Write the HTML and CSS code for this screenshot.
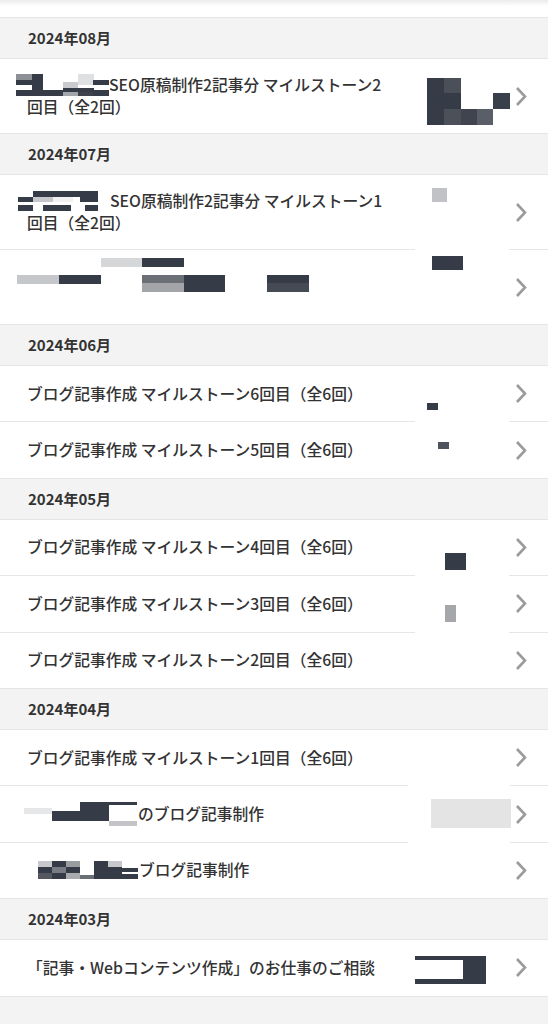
FILE: index.html
```html
<!DOCTYPE html>
<html lang="ja">
<head>
<meta charset="utf-8">
<title>取引履歴</title>
<link rel="stylesheet" href="styles.css">
</head>
<body>
<div class="page">
  <div class="topbar"></div>

  <section class="month">
    <h2 class="month-head">2024年08月</h2>
    <ul class="items">
      <li class="item">
        <p class="title"><svg class="pre pre-a" width="93" height="22" viewBox="0 0 93 22"><rect x="0" y="0" width="16" height="6" fill="#8d9096"/><rect x="16" y="0" width="11" height="22" fill="#363c47"/><rect x="0" y="6" width="16" height="5" fill="#363c47"/><rect x="0" y="16" width="47" height="6" fill="#363c47"/><rect x="47" y="8" width="15" height="6" fill="#c9cbce"/><rect x="47" y="14" width="31" height="4" fill="#363c47"/><rect x="47" y="18" width="15" height="4" fill="#a3a6aa"/><rect x="62" y="0" width="16" height="11" fill="#dfe0e2"/><rect x="62" y="18" width="16" height="4" fill="#3d434d"/><rect x="77" y="6" width="16" height="5" fill="#363c47"/><rect x="77" y="16" width="16" height="6" fill="#363c47"/></svg>SEO原稿制作2記事分 マイルストーン2回目（全2回）</p>
        <svg class="rd rd-1" width="83" height="47" viewBox="0 0 83 47"><rect x="0" y="0" width="17" height="47" fill="#363c47"/><rect x="17" y="0" width="17" height="15" fill="#4a4f58"/><rect x="17" y="15" width="17" height="16" fill="#363c47"/><rect x="17" y="31" width="17" height="16" fill="#4b5059"/><rect x="34" y="31" width="16" height="16" fill="#3f444e"/><rect x="50" y="31" width="16" height="16" fill="#5a5e66"/><rect x="66" y="15" width="17" height="16" fill="#3a404b"/></svg>
        <svg class="chev" width="12" height="21" viewBox="0 0 12 21"><path d="M2 2 L10 10.5 L2 19" /></svg>
      </li>
    </ul>
  </section>

  <section class="month">
    <h2 class="month-head">2024年07月</h2>
    <ul class="items">
      <li class="item gap">
        <p class="title"><svg class="pre pre-b" width="80" height="22" viewBox="0 0 80 22"><rect x="15" y="1" width="65" height="6" fill="#363c47"/><rect x="0" y="7" width="15" height="5" fill="#363c47"/><rect x="15" y="7" width="20" height="5" fill="#c5c7ca"/><rect x="35" y="7" width="20" height="5" fill="#f1f1f2"/><rect x="62" y="7" width="18" height="5" fill="#363c47"/><rect x="0" y="15" width="15" height="6" fill="#363c47"/><rect x="25" y="15" width="28" height="6" fill="#363c47"/><rect x="67" y="15" width="13" height="6" fill="#363c47"/></svg>SEO原稿制作2記事分 マイルストーン1回目（全2回）</p>
        <span class="rd rd-2"></span>
        <svg class="chev" width="12" height="21" viewBox="0 0 12 21"><path d="M2 2 L10 10.5 L2 19" /></svg>
      </li>
      <li class="item">
        <p class="title blank"></p>
        <svg class="rd rd-3" width="292" height="34" viewBox="0 0 292 34"><rect x="84" y="0" width="41" height="9" fill="#d6d7d9"/><rect x="125" y="0" width="42" height="9" fill="#363c47"/><rect x="0" y="17" width="42" height="9" fill="#c5c7ca"/><rect x="42" y="17" width="42" height="9" fill="#363c47"/><rect x="125" y="17" width="42" height="8" fill="#6b6f76"/><rect x="125" y="25" width="42" height="9" fill="#a3a5a9"/><rect x="167" y="17" width="41" height="17" fill="#363c47"/><rect x="250" y="17" width="42" height="8" fill="#363c47"/><rect x="250" y="25" width="42" height="9" fill="#454a54"/></svg>
        <span class="rd rd-4"></span>
        <svg class="chev" width="12" height="21" viewBox="0 0 12 21"><path d="M2 2 L10 10.5 L2 19" /></svg>
      </li>
    </ul>
  </section>

  <section class="month">
    <h2 class="month-head">2024年06月</h2>
    <ul class="items">
      <li class="item gap">
        <p class="title">ブログ記事作成 マイルストーン6回目（全6回）</p>
        <span class="rd rd-5"></span>
        <svg class="chev" width="12" height="21" viewBox="0 0 12 21"><path d="M2 2 L10 10.5 L2 19" /></svg>
      </li>
      <li class="item">
        <p class="title">ブログ記事作成 マイルストーン5回目（全6回）</p>
        <span class="rd rd-6"></span>
        <svg class="chev" width="12" height="21" viewBox="0 0 12 21"><path d="M2 2 L10 10.5 L2 19" /></svg>
      </li>
    </ul>
  </section>

  <section class="month">
    <h2 class="month-head">2024年05月</h2>
    <ul class="items">
      <li class="item gap">
        <p class="title">ブログ記事作成 マイルストーン4回目（全6回）</p>
        <span class="rd rd-7"></span>
        <svg class="chev" width="12" height="21" viewBox="0 0 12 21"><path d="M2 2 L10 10.5 L2 19" /></svg>
      </li>
      <li class="item gap">
        <p class="title">ブログ記事作成 マイルストーン3回目（全6回）</p>
        <span class="rd rd-8"></span>
        <svg class="chev" width="12" height="21" viewBox="0 0 12 21"><path d="M2 2 L10 10.5 L2 19" /></svg>
      </li>
      <li class="item">
        <p class="title">ブログ記事作成 マイルストーン2回目（全6回）</p>
        <svg class="chev" width="12" height="21" viewBox="0 0 12 21"><path d="M2 2 L10 10.5 L2 19" /></svg>
      </li>
    </ul>
  </section>

  <section class="month">
    <h2 class="month-head">2024年04月</h2>
    <ul class="items">
      <li class="item gap wide">
        <p class="title">ブログ記事作成 マイルストーン1回目（全6回）</p>
        <svg class="chev" width="12" height="21" viewBox="0 0 12 21"><path d="M2 2 L10 10.5 L2 19" /></svg>
      </li>
      <li class="item gap wide">
        <p class="title"><svg class="pre pre-c" width="113" height="24" viewBox="0 0 113 24"><rect x="0" y="6" width="28" height="6" fill="#e6e7e8"/><rect x="28" y="9" width="28" height="10" fill="#363c47"/><rect x="56" y="0" width="29" height="19" fill="#363c47"/><rect x="85" y="0" width="28" height="3" fill="#363c47"/><rect x="85" y="19" width="28" height="5" fill="#c2c4c7"/></svg>のブログ記事制作</p>
        <span class="rd rd-9"></span>
        <svg class="chev" width="12" height="21" viewBox="0 0 12 21"><path d="M2 2 L10 10.5 L2 19" /></svg>
      </li>
      <li class="item">
        <p class="title"><svg class="pre pre-d" width="100" height="18" viewBox="0 0 100 18"><rect x="0" y="0" width="14" height="6" fill="#c8c9cc"/><rect x="0" y="6" width="14" height="6" fill="#363c47"/><rect x="0" y="12" width="14" height="6" fill="#55595f"/><rect x="14" y="0" width="14" height="6" fill="#363c47"/><rect x="14" y="6" width="14" height="6" fill="#797c82"/><rect x="14" y="12" width="14" height="6" fill="#363c47"/><rect x="28" y="0" width="14" height="6" fill="#9a9ca0"/><rect x="28" y="6" width="14" height="6" fill="#363c47"/><rect x="28" y="12" width="14" height="6" fill="#a9abaf"/><rect x="42" y="14" width="14" height="4" fill="#6b6f76"/><rect x="56" y="0" width="14" height="18" fill="#363c47"/><rect x="70" y="0" width="14" height="6" fill="#c8c9cc"/><rect x="70" y="6" width="14" height="12" fill="#363c47"/><rect x="84" y="7" width="16" height="4" fill="#363c47"/><rect x="84" y="13" width="16" height="5" fill="#363c47"/></svg>ブログ記事制作</p>
        <svg class="chev" width="12" height="21" viewBox="0 0 12 21"><path d="M2 2 L10 10.5 L2 19" /></svg>
      </li>
    </ul>
  </section>

  <section class="month">
    <h2 class="month-head">2024年03月</h2>
    <ul class="items">
      <li class="item">
        <p class="title">「記事・Webコンテンツ作成」のお仕事のご相談</p>
        <span class="rd rd-10"></span>
        <svg class="chev" width="12" height="21" viewBox="0 0 12 21"><path d="M2 2 L10 10.5 L2 19" /></svg>
      </li>
    </ul>
  </section>
</div>
</body>
</html>
```

FILE: styles.css
```css
* {
  box-sizing: border-box;
  margin: 0;
  padding: 0;
}

body {
  margin: 0;
  background: #f3f3f3;
  font-family: "Noto Sans CJK JP", "Noto Sans", sans-serif;
  color: #333;
}

.page {
  width: 548px;
}

.topbar {
  height: 18px;
  background: linear-gradient(#ebebeb, #fff 6px);
  border-bottom: 1px solid #e6e6e6;
}

.month-head {
  height: 41px;
  padding-left: 28px;
  background: #f3f3f3;
  border-bottom: 1px solid #e6e6e6;
  font-size: 15px;
  font-weight: 700;
  line-height: 40px;
  color: #333;
}

.items {
  list-style: none;
}

.item {
  position: relative;
  display: flex;
  align-items: center;
  justify-content: space-between;
  min-height: 56.4px;
  padding: 15px 21px 15px 27px;
  background: #fff;
  border-bottom: 1px solid #e6e6e6;
}

.title {
  width: 364px;
  margin-right: auto;
  font-size: 15.75px;
  font-weight: 500;
  line-height: 22px;
  color: #333;
}

.title.blank {
  height: 44px;
}

.chev {
  flex: none;
  display: block;
}

.chev path {
  fill: none;
  stroke: #9b9b9b;
  stroke-width: 2.6;
}

/* redacted inline prefixes */
.pre {
  display: inline-block;
  vertical-align: top;
}

.pre-a {
  margin-left: -11px;
}

.pre-b {
  margin-left: -9px;
  margin-right: 12px;
}

.pre-c {
  margin-left: -3px;
  margin-right: 1px;
  margin-top: -1px;
}

.pre-d {
  margin-left: 11px;
  margin-right: 1px;
  margin-top: 2px;
}

/* redaction overlays */
.rd {
  position: absolute;
  display: block;
}

.rd-1 { left: 427px; top: 19px; }
.rd-2 { left: 432px; top: 13px; width: 15px; height: 14px; background: #c0c2c5; }
.rd-3 { left: 17px; top: 8px; }
.rd-4 { left: 432px; top: 6px; width: 31px; height: 14px; background: #363c47; }
.rd-5 { left: 427px; top: 37px; width: 11px; height: 7px; background: #363c47; }
.rd-6 { left: 438px; top: 20px; width: 11px; height: 7px; background: #4f545c; }
.rd-7 { left: 445px; top: 33px; width: 21px; height: 17px; background: #363c47; }
.rd-8 { left: 445px; top: 29px; width: 11px; height: 17px; background: #a5a7ab; }
.rd-9 { left: 431px; top: 13px; width: 80px; height: 29px; background: #e4e4e4; }
.rd-10 {
  left: 415px;
  top: 16px;
  width: 71px;
  height: 28px;
  border-top: 4px solid #363c47;
  border-bottom: 5px solid #363c47;
  border-right: 23px solid #363c47;
  background: #fff;
}

/* white interruptions of separators */
.gap::after {
  content: "";
  position: absolute;
  left: 415px;
  bottom: -1px;
  width: 94px;
  height: 1px;
  background: #fff;
}

.gap.wide::after {
  left: 408px;
  width: 102px;
}
```
